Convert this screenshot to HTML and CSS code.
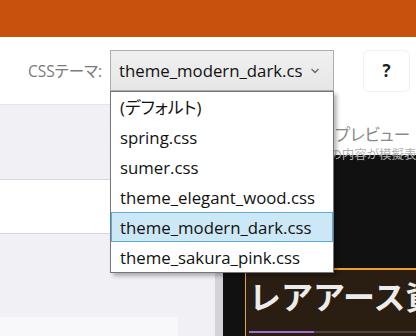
FILE: index.html
```html
<!DOCTYPE html>
<html lang="ja">
<head>
<meta charset="utf-8">
<title>CSSテーマ</title>
<link rel="stylesheet" href="styles.css">
</head>
<body>
<div class="app">
  <header class="topbar"></header>
  <div class="toolbar">
    <span class="theme-label">CSSテーマ:</span>
    <div class="select-wrap">
      <div class="select">
        <span class="select-text">theme_modern_dark.css</span>
        <svg class="chev" width="10" height="6" viewBox="0 0 10 6"><polyline points="1.5,1 5,4.5 8.5,1" fill="none" stroke="#666" stroke-width="1.3"/></svg>
      </div>
      <ul class="dropdown">
        <li class="opt">(デフォルト)</li>
        <li class="opt">spring.css</li>
        <li class="opt">sumer.css</li>
        <li class="opt">theme_elegant_wood.css</li>
        <li class="opt selected">theme_modern_dark.css</li>
        <li class="opt">theme_sakura_pink.css</li>
      </ul>
    </div>
    <button class="help">?</button>
  </div>
  <main class="main">
    <section class="editor">
      <div class="ed-band"></div>
      <div class="ed-input"></div>
      <div class="ed-gap"></div>
      <div class="ed-box"></div>
    </section>
    <div class="splitter"></div>
    <section class="preview">
      <div class="pv-head">
        <h2 class="pv-title">プレビュー</h2>
        <p class="pv-note">この内容が模擬表示されます</p>
      </div>
      <div class="pv-frame">
        <div class="card">
          <h1 class="card-title">レアアース資源</h1>
          <div class="divider"><span class="divider-accent"></span></div>
        </div>
      </div>
    </section>
  </main>
</div>
</body>
</html>
```

FILE: styles.css
```css
* { box-sizing: border-box; }
html, body { margin: 0; padding: 0; }
body {
  width: 416px;
  height: 336px;
  overflow: hidden;
  font-family: "Open Sans", "Noto Sans CJK JP", sans-serif;
  font-feature-settings: "palt";
  background: #fff;
}
.app { display: flex; flex-direction: column; height: 336px; }
.topbar { height: 37px; background: #c9510e; flex: none; }
.toolbar {
  height: 67px;
  flex: none;
  display: flex;
  align-items: center;
  justify-content: flex-end;
  padding-right: 6px;
  background: #fff;
  position: relative;
  z-index: 5;
}
.theme-label {
  font-size: 15.5px;
  color: #7a7a7a;
  margin-right: 8px;
}
.select-wrap { position: relative; width: 224px; margin-right: 29px; }
.select {
  height: 41px;
  display: flex;
  align-items: center;
  border: 1px solid #adadad;
  background: linear-gradient(#f0f0f0, #e6e6e6);
  padding-left: 8px;
  padding-right: 13px;
}
.select-text {
  flex: 1;
  overflow: hidden;
  white-space: nowrap;
  font-size: 16.8px;
  color: #111;
  margin-right: 8px;
}
.chev { flex: none; }
.dropdown {
  position: absolute;
  top: 100%;
  left: 0;
  width: 224px;
  margin: 0;
  padding: 0;
  list-style: none;
  background: #fff;
  border: 1px solid #767676;
  box-shadow: 3px 3px 4px rgba(0,0,0,0.28);
}
.opt {
  height: 30px;
  display: flex;
  align-items: center;
  padding-left: 8px;
  font-size: 16.8px;
  color: #111;
  white-space: nowrap;
  border: 1px solid transparent;
}
.opt.selected { background: #cce8f6; border-color: #5cadd8; }
.help {
  width: 47px;
  height: 42px;
  border: 1px solid #f1f1f1;
  border-radius: 6px;
  background: #fff;
  font-family: "Open Sans", sans-serif;
  font-weight: 700;
  font-size: 17px;
  color: #222;
  padding: 0;
}
.main { flex: 1; display: flex; min-height: 0; }
.editor {
  width: 215px;
  flex: none;
  display: flex;
  flex-direction: column;
  background: #f0f0f5;
  border-top: 1px solid #e6e6ea;
}
.ed-band { height: 74px; }
.ed-input {
  height: 55px;
  background: #fff;
  border-top: 1px solid #d6d6db;
  border-bottom: 1px solid #d6d6db;
}
.ed-gap { height: 83px; }
.ed-box { flex: 1; width: 178px; background: #f8f8fa; }
.splitter { width: 8px; flex: none; background: #d3d3d8; }
.preview { flex: 1; display: flex; flex-direction: column; min-width: 0; }
.pv-head {
  height: 51px;
  flex: none;
  background: #fff;
  padding-left: 112px;
  padding-top: 21px;
}
.pv-title {
  margin: 0;
  font-size: 16.5px;
  font-weight: 400;
  line-height: 20px;
  color: #8a8a8a;
}
.pv-note {
  margin: 3px 0 0 -16px;
  font-size: 12.5px;
  line-height: 14px;
  color: #b0b0b0;
  white-space: nowrap;
  overflow: hidden;
  position: relative;
  z-index: 1;
}
.pv-frame {
  flex: 1;
  background: #111;
  padding-top: 113px;
  padding-left: 22px;
  min-width: 0;
}
.card {
  background: #2a1e12;
  border-top: 2px solid #f0a02a;
  border-left: 1px solid #f0a02a;
  padding: 6px 0 0 3px;
  height: 100%;
  overflow: hidden;
}
.card-title {
  margin: 0;
  font-family: "Noto Sans CJK JP", sans-serif;
  font-feature-settings: normal;
  font-size: 32px;
  font-weight: 700;
  line-height: 39px;
  color: #ececec;
  white-space: nowrap;
}
.divider {
  margin-top: 16px;
  height: 2px;
  background: #4a4440;
  display: flex;
}
.divider-accent { width: 65px; background: #a06ed2; }
```
